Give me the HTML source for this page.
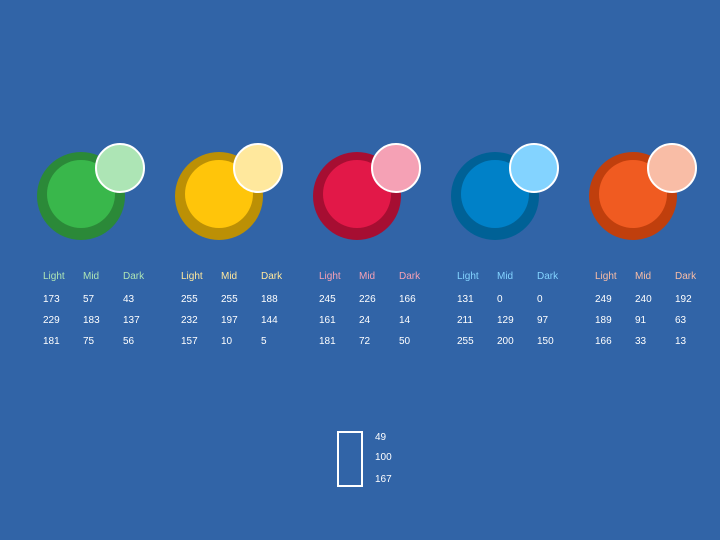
<!DOCTYPE html>
<html><head><style>
body{margin:0;width:720px;height:540px;background:#3164A7;position:relative;overflow:hidden;font-family:"Liberation Sans",sans-serif;}
.c{position:absolute;border-radius:50%;}
.t{position:absolute;font-size:10px;color:#fff;line-height:12px;}
</style></head><body>
<div id="g"></div>
<div style="position:absolute;left:337px;top:431px;width:22px;height:52px;border:2px solid #fff;"></div>
<div class="t" style="left:375px;top:432px">49</div>
<div class="t" style="left:375px;top:452px">100</div>
<div class="t" style="left:375px;top:474px">167</div>
<script>
var d=[[[173,229,181],[57,183,75],[43,137,56]],[[255,232,157],[255,197,10],[188,144,5]],[[245,161,181],[226,24,72],[166,14,50]],[[131,211,255],[0,129,200],[0,97,150]],[[249,189,166],[240,91,33],[192,63,13]]];
var h='';
d.forEach(function(s,i){var o=i*138;var r=function(c){return 'rgb('+c+')'};
h+='<div class="c" style="left:'+(37+o)+'px;top:152px;width:88px;height:88px;background:'+r(s[2])+'"></div>';
h+='<div class="c" style="left:'+(47+o)+'px;top:160px;width:68px;height:68px;background:'+r(s[1])+'"></div>';
h+='<div class="c" style="left:'+(95+o)+'px;top:143px;width:46px;height:46px;border:2px solid #fff;background:'+r(s[0])+'"></div>';
var lc=r(s[0]);
h+='<div class="t" style="left:'+(43+o)+'px;top:271px;color:'+lc+'">Light</div>';
h+='<div class="t" style="left:'+(83+o)+'px;top:271px;color:'+lc+'">Mid</div>';
h+='<div class="t" style="left:'+(123+o)+'px;top:271px;color:'+lc+'">Dark</div>';
var ys=[294,315,336];
for(var k=0;k<3;k++)for(var j=0;j<3;j++)h+='<div class="t" style="left:'+(43+40*j+o)+'px;top:'+ys[k]+'px">'+s[j][k]+'</div>';
});
document.getElementById('g').innerHTML=h;
</script>
</body></html>
